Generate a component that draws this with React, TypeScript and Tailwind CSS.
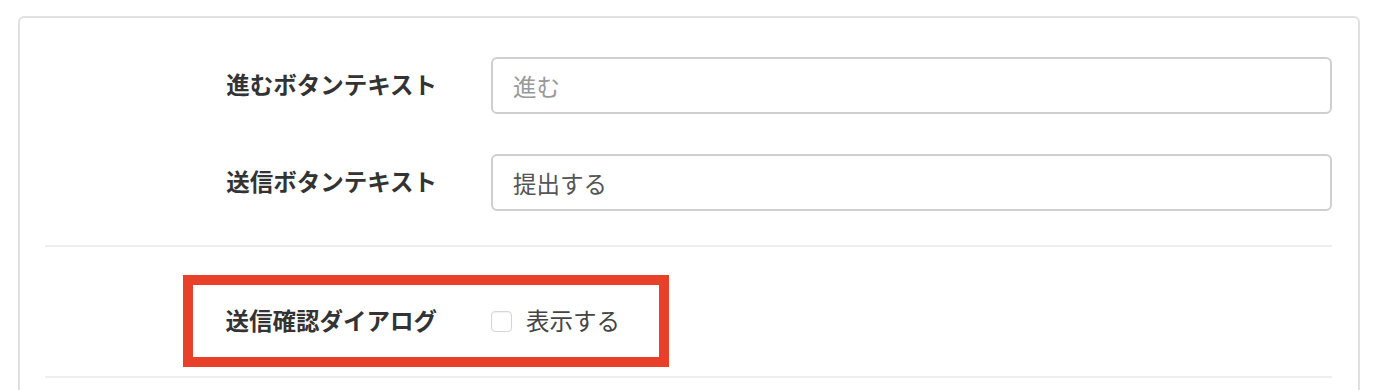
import React from "react";

const font = { fontFamily: '"Noto Sans CJK JP", "Noto Sans", sans-serif' };

function TextRow({ label, value, placeholder }: { label: string; value?: string; placeholder?: string }) {
  return (
    <div className="flex items-center h-[57px]">
      <label className="w-[392px] text-right text-[23.5px] font-bold text-[#333] leading-none pb-[2px]">{label}</label>
      <input
        className="ml-[54px] flex-1 h-[57px] border-2 border-[#cfcfcf] rounded-[6px] px-[20px] text-[23.5px] text-[#555] placeholder:text-[#999] outline-none bg-white"
        style={font}
        defaultValue={value}
        placeholder={placeholder}
      />
    </div>
  );
}

export default function App() {
  return (
    <div className="min-h-screen bg-white pt-[16px] px-[18px]" style={font}>
      <div className="border-2 border-[#e1e1e1] rounded-[6px] bg-white pl-[25px] pr-[26px] pt-[39px] pb-[60px]">
        <TextRow label="進むボタンテキスト" placeholder="進む" />
        <div className="h-[40px]" />
        <TextRow label="送信ボタンテキスト" value="提出する" />

        <div className="mt-[34px] h-[2px] bg-[#eeeeee]" />

        {/* 送信確認 row, highlighted */}
        <div className="mt-[28px] ml-[138px] w-[486px] h-[92px] border-[10px] border-[#e9402a] flex items-center">
          <label className="w-[244px] text-right text-[23.5px] font-bold text-[#333] leading-none">
            送信確認ダイアログ
          </label>
          <label className="ml-[54px] flex items-center">
            <span className="w-[21px] h-[21px] rounded-[4px] border border-[#d6d6d6] bg-white shadow-[inset_0_1px_2px_rgba(0,0,0,0.06)]" />
            <span className="ml-[14px] text-[23.5px] text-[#444] leading-none">表示する</span>
          </label>
        </div>

        <div className="mt-[9px] h-[2px] bg-[#eeeeee]" />
      </div>
    </div>
  );
}
